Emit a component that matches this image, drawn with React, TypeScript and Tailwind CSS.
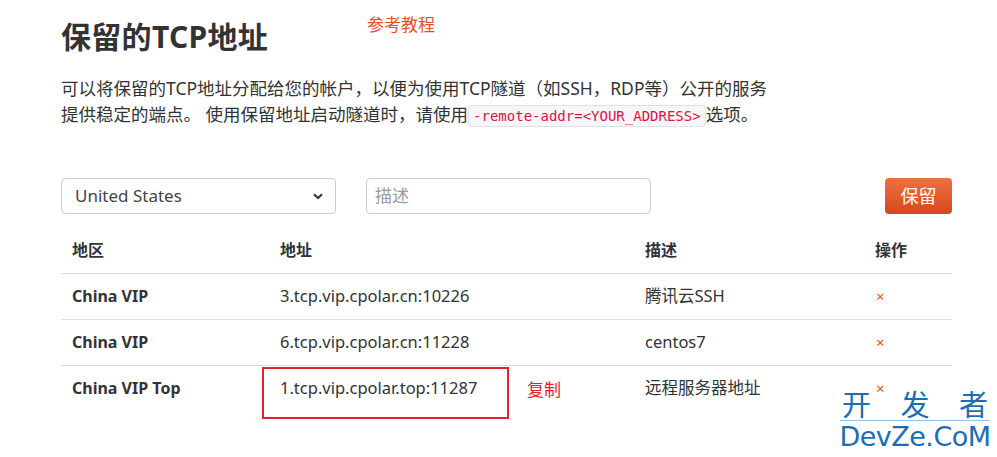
const rows = [
  { region: "China VIP", addr: "3.tcp.vip.cpolar.cn:10226", desc: "腾讯云SSH" },
  { region: "China VIP", addr: "6.tcp.vip.cpolar.cn:11228", desc: "centos7" },
  { region: "China VIP Top", addr: "1.tcp.vip.cpolar.top:11287", desc: "远程服务器地址" },
];

const sans = "font-['Noto_Sans','Noto_Sans_CJK_SC',sans-serif]";

export default function App() {
  return (
    <div className={`relative h-[457px] w-[997px] overflow-hidden bg-white text-[#333] ${sans}`}>
      <div className="pl-[61px] pr-[45px]">
        <div className="flex items-start">
          <h1 className="mt-[19px] text-[30px] font-bold leading-[36px] tracking-[0.3px]">保留的TCP地址</h1>
          <span className="ml-[99px] mt-[12px] text-[17px] leading-[26px] text-[#e4502a]">参考教程</span>
        </div>

        <p className="mt-[20px] text-[17.5px] leading-[26px]">
          可以将保留的TCP地址分配给您的帐户，以便为使用TCP隧道（如SSH，RDP等）公开的服务
          <br />
          提供稳定的端点。 使用保留地址启动隧道时，请使用
          <code className="rounded-[4px] border border-[#e1e1e8] bg-[#f7f7f9] px-[4px] py-[2px] font-['DejaVu_Sans_Mono',monospace] text-[14px] text-[#dd1144]">
            -remote-addr=&lt;YOUR_ADDRESS&gt;
          </code>
          选项。
        </p>

        <div className="mt-[49px] flex items-center">
          <div className="flex h-[36px] w-[275px] items-center justify-between rounded-[4px] border border-[#ccc] px-[13px] text-[17px]">
            <span className="text-[#444]">United States</span>
            <svg width="12" height="12" viewBox="0 0 12 12" className="mr-[-2px]">
              <path d="M2 4.2 L6 8 L10 4.2" fill="none" stroke="#333" strokeWidth="2" />
            </svg>
          </div>
          <div className="ml-[30px] flex h-[36px] w-[285px] items-center rounded-[4px] border border-[#ccc] px-[8px] text-[17px] text-[#999]">
            描述
          </div>
          <button className="ml-auto h-[36px] w-[67px] rounded-[4px] bg-gradient-to-b from-[#ec7140] to-[#d8461a] text-[18px] text-white">
            保留
          </button>
        </div>

        <table className="mt-[13px] w-full border-collapse text-[16px]">
          <thead>
            <tr className="h-[46px] border-b border-[#ddd] text-left font-bold">
              <th className="w-[208px] pl-[11px]">地区</th>
              <th className="w-[365px] pl-[11px]">地址</th>
              <th className="w-[230px] pl-[11px]">描述</th>
              <th className="pl-[11px]">操作</th>
            </tr>
          </thead>
          <tbody>
            {rows.map((r, i) => (
              <tr key={i} className={`h-[46px] ${i < 2 ? "border-b border-[#ddd]" : ""}`}>
                <td className="pl-[11px] font-bold">{r.region}</td>
                <td className="pl-[11px] text-[16.5px]">{r.addr}</td>
                <td className="pl-[11px] text-[16.5px]">{r.desc}</td>
                <td className="pl-[12px] text-[15px] text-[#e4502a]">×</td>
              </tr>
            ))}
          </tbody>
        </table>
      </div>

      {/* annotation: red box + 复制 */}
      <div className="absolute left-[262px] top-[367px] h-[52px] w-[247px] border-2 border-[#e3222b]" />
      <span className="absolute left-[527px] top-[377px] text-[17px] text-[#e3222b]">复制</span>

      {/* watermark */}
      <div className="absolute left-[840px] top-[390px] flex w-[150px] flex-col items-center text-[#1c6db4]">
        <div className="flex w-full justify-between px-[2px] text-[29px] leading-[30px]">
          <span>开</span>
          <span>发</span>
          <span>者</span>
        </div>
        <div className="h-[1px] w-full bg-[#8cc4ea]" />
        <div className="mt-[2px] font-['DejaVu_Sans',sans-serif] text-[27px] leading-[27px] tracking-[-0.5px]">DevZe.CoM</div>
      </div>
    </div>
  );
}
